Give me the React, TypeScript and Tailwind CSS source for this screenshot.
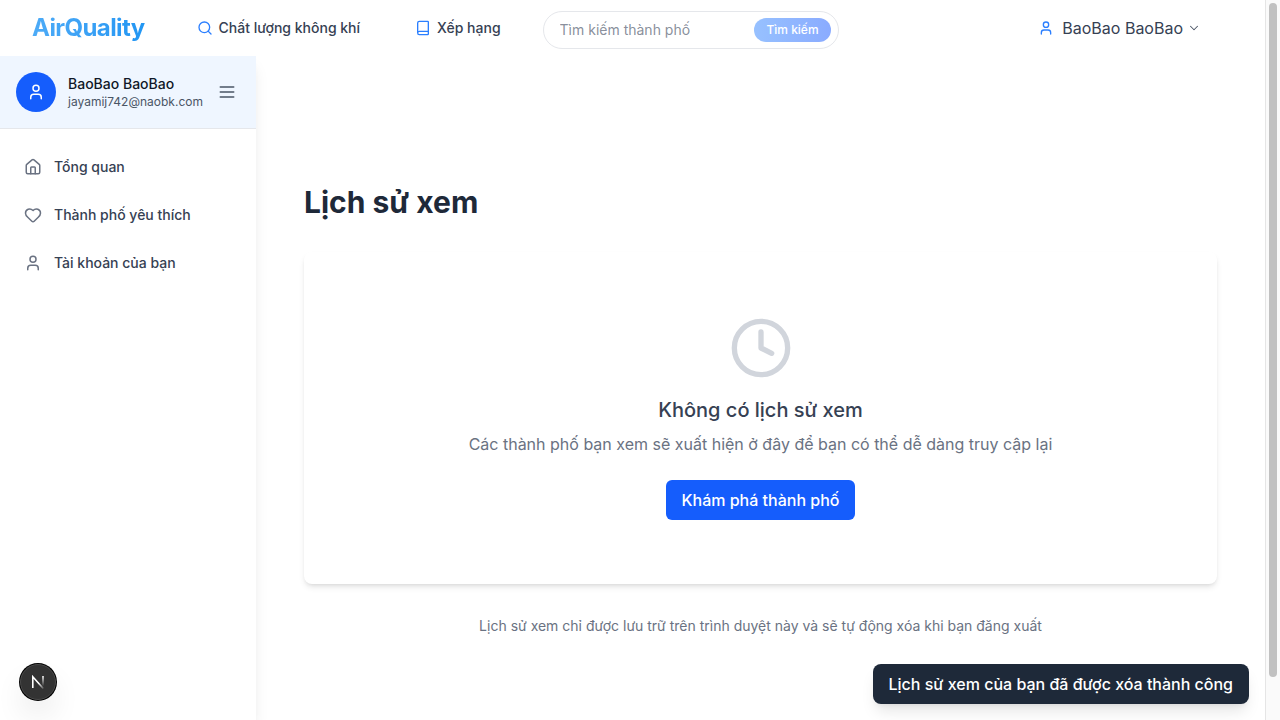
import { Book, ChevronDown, Clock, Heart, House, Search, User } from "lucide-react";

const navItems = [
  { label: "Tổng quan", icon: House },
  { label: "Thành phố yêu thích", icon: Heart },
  { label: "Tài khoản của bạn", icon: User },
];

function Header() {
  return (
    <header className="flex h-14 shrink-0 items-center bg-white pl-8 pr-16 text-gray-700">
      <a
        href="#"
        className="bg-gradient-to-r from-[#4dabf7] to-[#2196f3] bg-clip-text text-2xl font-bold tracking-tight text-transparent"
      >
        AirQuality
      </a>
      <nav className="ml-13 flex items-center gap-[55px] text-sm font-medium">
        <a href="#" className="flex items-center gap-1.5 whitespace-nowrap">
          <Search size={16} className="text-blue-500" />
          Chất lượng không khí
        </a>
        <a href="#" className="flex items-center gap-1.5 whitespace-nowrap">
          <Book size={16} className="text-blue-500" />
          Xếp hạng
        </a>
      </nav>
      <form className="ml-[42px] mt-1 flex h-[38px] w-74 items-center rounded-full border border-gray-200 pl-4 pr-[7px]">
        <input
          type="text"
          aria-label="Tìm kiếm thành phố"
          placeholder="Tìm kiếm thành phố"
          className="min-w-0 flex-1 text-sm outline-none placeholder:text-gray-500/80"
        />
        <button
          type="button"
          className="h-6 rounded-full bg-gradient-to-r from-[#97c1ff] to-[#8aabff] px-3 text-xs font-medium text-white"
        >
          Tìm kiếm
        </button>
      </form>
      <button type="button" className="ml-auto flex items-center gap-2 whitespace-nowrap">
        <User size={16} className="text-blue-500" />
        <span className="flex items-center gap-1">
          BaoBao BaoBao
          <ChevronDown size={14} strokeWidth={1.75} className="text-gray-600" />
        </span>
      </button>
    </header>
  );
}

function Sidebar() {
  return (
    <aside className="w-64 shrink-0 bg-white shadow-lg">
      <div className="flex items-center border-b border-gray-200 bg-blue-50 p-4 pr-[19px]">
        <div className="flex size-10 items-center justify-center rounded-full bg-[#155dfc] text-white">
          <User size={18} />
        </div>
        <div className="ml-3">
          <p className="text-sm font-medium leading-5 text-gray-900">BaoBao BaoBao</p>
          <p className="text-xs leading-4 text-gray-600">jayamij742@naobk.com</p>
        </div>
        <button type="button" aria-label="Menu" className="ml-auto text-gray-600">
          <svg
            width="20"
            height="20"
            viewBox="0 0 24 24"
            fill="none"
            stroke="currentColor"
            strokeWidth="2"
            strokeLinecap="round"
          >
            <path d="M4 6h16M4 12h16M4 18h16" />
          </svg>
        </button>
      </div>
      <nav className="flex flex-col gap-1 px-2 py-4">
        {navItems.map(({ label, icon: Icon }) => (
          <a
            key={label}
            href="#"
            className="flex items-center gap-3 rounded-lg px-4 py-3 text-sm font-medium text-gray-700"
          >
            <Icon size={18} className="text-gray-500" />
            {label}
          </a>
        ))}
      </nav>
    </aside>
  );
}

function History() {
  return (
    <main className="flex-1 px-12 pt-32">
      <h1 className="mb-8 text-3xl font-bold leading-9 text-gray-800">Lịch sử xem</h1>
      <section className="flex flex-col items-center rounded-lg bg-white p-16 text-center shadow-md">
        <Clock size={64} className="mb-4 text-gray-300" />
        <h2 className="mb-2 text-xl font-medium text-gray-700">Không có lịch sử xem</h2>
        <p className="mb-6 text-gray-500">
          Các thành phố bạn xem sẽ xuất hiện ở đây để bạn có thể dễ dàng truy cập lại
        </p>
        <button type="button" className="rounded-md bg-[#155dfc] px-4 py-2 font-medium text-white">
          Khám phá thành phố
        </button>
      </section>
      <p className="mt-8 text-center text-sm text-gray-500">
        Lịch sử xem chỉ được lưu trữ trên trình duyệt này và sẽ tự động xóa khi bạn đăng xuất
      </p>
    </main>
  );
}

export default function App() {
  return (
    <div className="flex h-screen overflow-hidden bg-white font-['Inter',sans-serif]">
      <div className="relative flex min-w-0 flex-1 flex-col overflow-hidden">
        <Header />
        <div className="flex flex-1 overflow-hidden">
          <Sidebar />
          <History />
        </div>
        <div
          role="status"
          className="absolute bottom-4 right-4 rounded-lg bg-gray-800 px-4 py-2 font-medium text-white shadow-lg"
        >
          Lịch sử xem của bạn đã được xóa thành công
        </div>
        <button
          type="button"
          aria-label="Next.js"
          className="absolute bottom-5 left-5 flex size-9 items-center justify-center rounded-full border border-[#4a4a4a] bg-[#333333] shadow-[0_0_0_1px_#000,0_16px_32px_-8px_rgba(0,0,0,0.24)]"
        >
          <svg width="14" height="14" viewBox="0 0 14 14" fill="none" strokeWidth="1.6">
            <defs>
              <linearGradient id="stem" x1="0" y1="1" x2="0" y2="13" gradientUnits="userSpaceOnUse">
                <stop stopColor="#fff" />
                <stop offset="0.85" stopColor="#fff" stopOpacity="0" />
              </linearGradient>
              <linearGradient id="slash" x1="8" y1="8" x2="12.5" y2="13" gradientUnits="userSpaceOnUse">
                <stop stopColor="#fff" />
                <stop offset="1" stopColor="#fff" stopOpacity="0.2" />
              </linearGradient>
            </defs>
            <path d="M1.8 13V1.8L12.3 13.5" stroke="url(#slash)" />
            <path d="M12 1v10" stroke="url(#stem)" />
          </svg>
        </button>
      </div>
      <div aria-hidden="true" className="flex w-[15px] shrink-0 flex-col items-center border-l border-[#e5e5e5] bg-[#fafafa] pt-[3px]">
        <div className="h-[94%] w-2 rounded-full bg-[#c1c1c1]" />
      </div>
    </div>
  );
}
